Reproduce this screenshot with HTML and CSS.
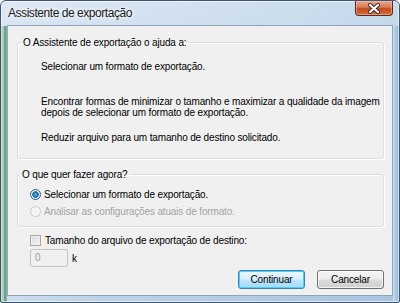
FILE: index.html
```html
<!DOCTYPE html>
<html lang="pt">
<head>
<meta charset="utf-8">
<link rel="stylesheet" href="styles.css">
</head>
<body>
<div class="window">
  <div class="titlebar">
    <span class="title">Assistente de exportação</span>
    <div class="close">
      <svg width="16" height="11" viewBox="0 0 16 11"><path d="M4 2 L12 9 M12 2 L4 9" stroke="#3a2a2a" stroke-width="4" stroke-linecap="round"/><path d="M4 2 L12 9 M12 2 L4 9" stroke="#fff" stroke-width="2.2" stroke-linecap="round"/></svg>
    </div>
  </div>
  <div class="client">
    <fieldset class="group g1">
      <legend>O Assistente de exportação o ajuda a:</legend>
      <p class="p1">Selecionar um formato de exportação.</p>
      <p class="p2">Encontrar formas de minimizar o tamanho e maximizar a qualidade da imagem<br>depois de selecionar um formato de exportação.</p>
      <p class="p3">Reduzir arquivo para um tamanho de destino solicitado.</p>
    </fieldset>
    <fieldset class="group g2">
      <legend>O que quer fazer agora?</legend>
      <div class="radio"><span class="rb checked"></span>Selecionar um formato de exportação.</div>
      <div class="radio disabled"><span class="rb"></span>Analisar as configurações atuais de formato.</div>
    </fieldset>
    <div class="check"><span class="cb"></span>Tamanho do arquivo de exportação de destino:</div>
    <div class="sizerow"><span class="input">0</span><span class="unit">k</span></div>
    <div class="buttons">
      <div class="btn default">Continuar</div>
      <div class="btn">Cancelar</div>
    </div>
  </div>
</div>
</body>
</html>
```
FILE: styles.css
```css
* { box-sizing: border-box; }
html, body { margin: 0; padding: 0; }
body { width: 400px; height: 303px; overflow: hidden; background: #fff; font-family: "Liberation Sans", Arial, sans-serif; }
.window {
  width: 400px; height: 303px;
  border: 1px solid #3d5670;
  border-radius: 6px 6px 2px 2px;
  padding: 0 6px 6px 6px;
  display: flex; flex-direction: column;
  background:
    linear-gradient(to right, #6a9a80 0, #c8e0d4 2px, #5a9076 4px, #9cc4b0 6px) left 25px / 6px 100% no-repeat,
    linear-gradient(to right, #c8dcee 0, #8ab4d8 100%) right 25px / 6px 100% no-repeat,
    linear-gradient(160deg, #dce8f3 0%, #c3d7ea 40%, #e6eff8 55%, #bcd2e8 75%, #a9c4e0 100%);
  box-shadow: inset 0 0 0 1px rgba(255,255,255,0.6);
}
.titlebar { height: 24px; display: flex; align-items: flex-start; justify-content: space-between; }
.title { font-size: 12px; color: #1a1a1a; margin: 5px 0 0 1px; letter-spacing: -0.45px; text-shadow: 0 0 6px #fff, 0 0 3px #fff; }
.close {
  width: 38px; height: 15px;
  border: 1px solid #5a2a1a; border-top: none;
  border-radius: 0 0 4px 4px;
  background: linear-gradient(#e9a98e 0%, #d87a55 45%, #c1491f 55%, #d3703f 100%);
  display: flex; align-items: center; justify-content: center;
  box-shadow: inset 0 0 0 1px rgba(255,200,180,0.5);
}
.client {
  flex: 1;
  background: #f0f0f0;
  border: 1px solid #8ea4ba;
  padding: 11px 8px 0 9px;
  display: flex; flex-direction: column;
  font-size: 10px; line-height: 11px; color: #000;
  letter-spacing: -0.15px; white-space: nowrap;
}
.group {
  margin: 0; padding: 0;
  border: 1px solid #d5dfe5;
  border-radius: 3px;
  box-shadow: 1px 1px 0 #fff inset, 1px 1px 0 #fff;
  min-width: 0;
}
.group legend { padding: 0 2px; margin-left: 3px; }
.g1 { height: 122px; }
.g1 p { margin: 0 0 0 23px; }
.g1 .p1 { margin-top: 13px; }
.g1 .p2 { margin-top: 24px; }
.g1 .p3 { margin-top: 14px; }
.g2 { margin-top: 10px; height: 58px; }
.g2 legend { margin-left: 2px; }
.radio { display: flex; align-items: center; height: 11px; margin-left: 12px; }
.radio:first-of-type { margin-top: 9px; }
.radio + .radio { margin-top: 6px; }
.radio.disabled { color: #a3a3a3; }
.rb {
  width: 11px; height: 11px; border-radius: 50%;
  border: 1px solid #8a8a8a;
  background: radial-gradient(circle at 40% 40%, #ffffff, #dcdcdc);
  margin-right: 3px; flex: none;
}
.rb.checked {
  border-color: #2c628b;
  background: radial-gradient(circle, #5fc0ee 0, #1a6aa8 2.5px, #2a73a8 3px, #e8f0f6 3.6px, #c9d8e4 100%);
}
.disabled .rb { border-color: #c8c8c8; background: #f4f4f4; }
.check { display: flex; align-items: center; height: 11px; margin-top: 8px; padding-left: 13px; }
.cb {
  width: 11px; height: 11px; border: 1px solid #a8a8a8; margin-right: 4px; flex: none;
  background: linear-gradient(135deg, #d8d8d8, #f6f6f6);
  box-shadow: inset 0 0 0 1px #efefef;
}
.sizerow { display: flex; align-items: center; margin-top: 3px; padding-left: 13px; }
.input {
  width: 38px; height: 18px; border: 1px solid #c4c4c4; border-radius: 2px;
  color: #9a9a9a; padding: 2px 0 0 4px; background: #f0f0f0;
}
.unit { margin-left: 4px; }
.buttons { display: flex; justify-content: flex-end; gap: 12px; margin-top: 3px; }
.btn {
  width: 67px; height: 19px; border: 1px solid #707070; border-radius: 3px;
  display: flex; align-items: center; justify-content: center;
  background: linear-gradient(#f4f4f4 0%, #ececec 48%, #dcdcdc 52%, #cfcfcf 100%);
  box-shadow: inset 0 0 0 1px rgba(255,255,255,0.7);
}
.btn.default {
  border-color: #3c7fb1;
  background: linear-gradient(#eaf6fd 0%, #d9f0fc 48%, #bee6fd 52%, #a7d9f5 100%);
  box-shadow: inset 0 0 0 1px #48d1fa;
}
```
